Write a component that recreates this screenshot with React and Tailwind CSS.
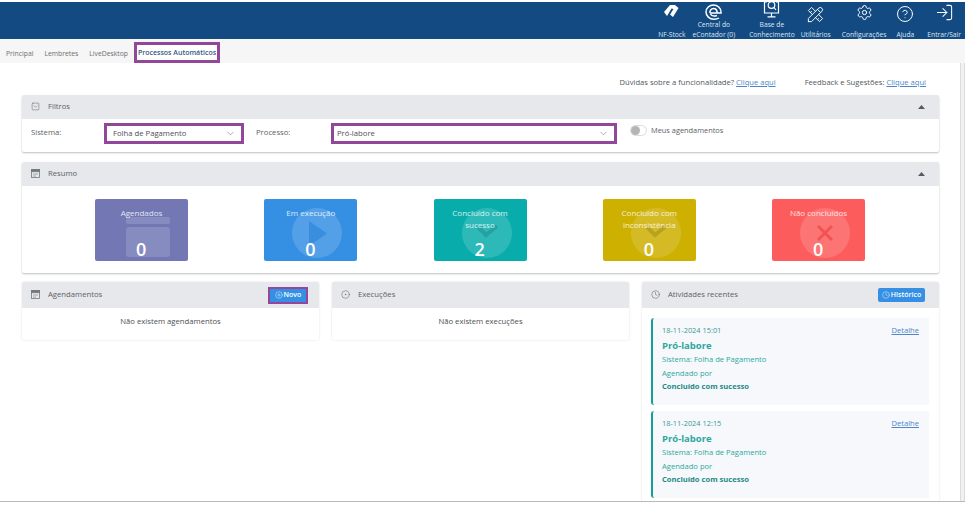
import { Settings, CircleHelp, LogIn, ChevronDown, Clock, CirclePlus, CircleDot, SquareChevronDown } from "lucide-react";
import { TbTools } from "react-icons/tb";

const navItems = [
  { label: ["NF-Stock"], ml: "ml-0", icon: "nf" },
  { label: ["Central do", "eContador (0)"], ml: "ml-[7px]", icon: "e" },
  { label: ["Base de", "Conhecimento"], ml: "ml-[14px]", icon: "base" },
  { label: ["Utilitários"], ml: "ml-[6px]", icon: "tools" },
  { label: ["Configurações"], ml: "ml-[11px]", icon: "gear" },
  { label: ["Ajuda"], ml: "ml-[10px]", icon: "help" },
  { label: ["Entrar/Sair"], ml: "ml-[13px]", icon: "exit" },
];

function NavIcon({ type }) {
  if (type === "nf") {
    return (
      <svg width="16" height="12" viewBox="0 0 16 12" fill="white" className="mt-[3px]">
        <path d="M0 7 L6 0 H11 L14.5 3 L9 12 L6 9.5 L9.5 4 L7.5 3.5 L3 11 Z" />
      </svg>
    );
  }
  if (type === "e") {
    return (
      <svg width="17" height="16" viewBox="0 0 17 16" fill="none" stroke="white" strokeWidth="1.5" className="mt-[2px]">
        <path d="M14 14 C12.5 15 11 15.2 9 15.2 C4.5 15.2 1 12 1 8 C1 4 4.5 1 8.5 1 C12.5 1 16 4 16 8 V9 H5" />
        <path d="M5 9 C4.5 6.5 6.5 4.5 8.5 4.5 C10.5 4.5 12.5 6 12 9 M5.5 10 C6.5 12 9 12.5 12 11.5" />
      </svg>
    );
  }
  if (type === "base") {
    return (
      <svg width="17" height="16" viewBox="0 0 17 16" fill="none" stroke="white" strokeWidth="1.2">
        <path d="M4 0 H1.5 V11 H15.5 V0 H13" />
        <circle cx="8.5" cy="3" r="3.3" />
        <path d="M11 5.5 L13 8 M8.5 11 V14.5 M4.5 14.8 H12.5" />
      </svg>
    );
  }
  if (type === "tools") return <TbTools size={19} color="white" strokeWidth={1.2} className="mt-[3px]" />;
  if (type === "gear") return <Settings size={17} color="white" strokeWidth={1.4} className="mt-[2px]" />;
  if (type === "help") return <CircleHelp size={18} color="white" strokeWidth={1.3} className="mt-[3px]" />;
  return <LogIn size={19} color="white" strokeWidth={1.3} className="mt-[1px]" />;
}

function Header() {
  return (
    <div className="h-[37px] mt-[2px] bg-[#134a82] flex justify-end items-start text-white pr-[4px]">
      {navItems.map((item) => (
        <div key={item.label[0]} className={`${item.ml} h-[37px] flex flex-col items-center justify-between`}>
          <div className="h-[18px] flex items-start">
            <NavIcon type={item.icon} />
          </div>
          <div className="text-[6.7px] leading-[9.5px] text-center whitespace-nowrap text-[#dbe6f2]">
            {item.label.map((l) => (
              <div key={l}>{l}</div>
            ))}
          </div>
        </div>
      ))}
    </div>
  );
}

function Tabs() {
  return (
    <div className="h-[24px] bg-[#f6f6f6] flex items-start text-[6.8px] leading-[10px] text-[#6b6f73]">
      <div className="pl-[6px] pt-[10px]">Principal</div>
      <div className="pl-[11px] pt-[10px]">Lembretes</div>
      <div className="pl-[11px] pt-[10px]">LiveDesktop</div>
      <div className="ml-[6px] mt-[3px] h-[21px] w-[86px] border-[3px] border-[#93479b] bg-white text-[#34597f] font-semibold text-[7px] flex items-center justify-center whitespace-nowrap">
        Processos Automáticos
      </div>
    </div>
  );
}

function CalendarIcon() {
  return (
    <svg width="9" height="9" viewBox="0 0 9 9" fill="none" stroke="#73787c" strokeWidth="0.8">
      <rect x="0.5" y="0.5" width="8" height="8" />
      <rect x="0.5" y="0.5" width="8" height="2.2" fill="#73787c" />
      <path d="M2 5 H7 M2 7 H5" strokeWidth="0.6" />
    </svg>
  );
}

function Triangle() {
  return (
    <svg width="7" height="4" viewBox="0 0 7 4" fill="#555a5e">
      <path d="M3.5 0 L7 4 H0 Z" />
    </svg>
  );
}

function Panel({ title, icon, right, children, className = "" }) {
  return (
    <div className={`bg-white rounded-[2px] ${className}`}>
      <div className="h-[24px] bg-[#e6e8eb] rounded-t-[2px] flex items-center pb-[1px] pl-[9px] pr-[14px] text-[#5d6266] text-[7.7px]">
        <span className="w-[17px] text-[#5d6266]">{icon}</span>
        <span>{title}</span>
        <span className="ml-auto">{right}</span>
      </div>
      {children}
    </div>
  );
}

function Select({ value, className }) {
  return (
    <div className={`${className} h-[21px] border-[3px] border-[#93479b] bg-white flex items-center justify-between pr-[5px] text-[7.7px] text-[#4c5054] font-medium`}>
      <span>{value}</span>
      <ChevronDown size={11} color="#777" strokeWidth={1.3} />
    </div>
  );
}

function StatusIcon({ type }) {
  if (type === "calendar") {
    return (
      <div className="absolute left-[31px] top-[18px] w-[44px] flex flex-col gap-[3px]">
        <div className="h-[7px] bg-white/15 rounded-[2px]" />
        <div className="h-[30px] bg-white/15 rounded-[3px]" />
      </div>
    );
  }
  return (
    <div className="absolute left-[28px] top-[9px] w-[50px] h-[50px] rounded-full bg-white/15 flex items-center justify-center">
      {type === "play" && (
        <svg width="18" height="25" viewBox="0 0 18 25" fill="#3a8ee0" className="ml-[1px]">
          <path d="M0 0 L18 12.5 L0 25 Z" />
        </svg>
      )}
      {type === "check" && (
        <svg width="22" height="15" viewBox="0 0 22 15" fill="none" stroke="rgba(0,0,0,0.13)" strokeWidth="4" className="mt-[-4px]">
          <path d="M2 3 L10 11 L21 2" />
        </svg>
      )}
      {type === "x" && (
        <svg width="16" height="16" viewBox="0 0 16 16" fill="none" stroke="rgba(240,80,80,0.9)" strokeWidth="3" className="mt-[-1px]">
          <path d="M1 1 L15 15 M15 1 L1 15" />
        </svg>
      )}
    </div>
  );
}

const resumo = [
  { title: "Agendados", value: 0, bg: "bg-[#7378b5]", icon: "calendar" },
  { title: "Em execução", value: 0, bg: "bg-[#3590e4]", icon: "play" },
  { title: "Concluído com sucesso", value: 2, bg: "bg-[#08adab]", icon: "check" },
  { title: "Concluído com inconsistência", value: 0, bg: "bg-[#cdb000]", icon: "check" },
  { title: "Não concluídos", value: 0, bg: "bg-[#fd5c5c]", icon: "x" },
];

function StatusCard({ item }) {
  return (
    <div className={`relative w-[93px] h-[62px] rounded-[2px] overflow-hidden ${item.bg} text-white`}>
      <StatusIcon type={item.icon} />
      <div className="relative px-[14px] pt-[8px] text-[8px] leading-[11.5px] text-center text-white/80">{item.title}</div>
      <div className="absolute left-0 right-0 bottom-[1px] text-center text-[18px] leading-[22px] font-semibold pr-[0.5px]">{item.value}</div>
    </div>
  );
}

function Activity({ date }) {
  return (
    <div className="h-[87px] bg-[#f6f8fb] border-l-[2px] border-[#12a19a] rounded-l-[3px] pl-[9px] pr-[10px] pt-[7px] text-[#2da79f] text-[7.6px]">
      <div className="flex justify-between leading-[11px]">
        <span className="text-[7.4px] text-[#3a9a96]">{date}</span>
        <span className="text-[#4d87c7] underline">Detalhe</span>
      </div>
      <div className="text-[9.5px] font-bold leading-[14px] mt-[3px]">Pró-labore</div>
      <div className="leading-[13px]">Sistema: Folha de Pagamento</div>
      <div className="leading-[13px] mt-[1px]">Agendado por</div>
      <div className="leading-[13px] font-bold text-[#1e8a85]">Concluído com sucesso</div>
    </div>
  );
}

export default function App() {
  return (
    <div className="w-[968px] h-[505px] overflow-hidden bg-white" style={{ fontFamily: '"Open Sans", sans-serif' }}>
      <div className="w-[965px] h-[502px] border-b border-[#b9b9b9] overflow-hidden flex flex-col">
        <Header />
        <Tabs />

        <div className="flex flex-1 min-h-0">
          <div className="w-[960px] pl-[22px] pr-[21px]">
            <div className="h-[32px] flex justify-end items-start pt-[14px] text-[7.6px] leading-[11px] text-[#53575b] pr-[13px]">
              <span>
                Dúvidas sobre a funcionalidade? <span className="text-[#4d87c7] underline">Clique aqui</span>
              </span>
              <span className="ml-[29px]">
                Feedback e Sugestões: <span className="text-[#4d87c7] underline">Clique aqui</span>
              </span>
            </div>

            <Panel
              title="Filtros"
              icon={<SquareChevronDown size={9} strokeWidth={1.3} />}
              right={<Triangle />}
              className="h-[57px] shadow-[0_1px_2px_rgba(0,0,0,0.25)]"
            >
              <div className="flex items-start h-[33px] pl-[9px] pt-[4px] text-[7.7px] leading-[19px] text-[#5d6266]">
                <span className="w-[73px]">Sistema:</span>
                <Select value="Folha de Pagamento" className="w-[140px] pl-[6px]" />
                <span className="ml-[12px] w-[75px]">Processo:</span>
                <Select value="Pró-labore" className="w-[286px] pl-[3px]" />
                <span className="ml-[13px] mt-[2px] w-[17px] h-[11px] rounded-full border border-[#dcdcdc] flex items-center">
                  <span className="w-[9px] h-[9px] rounded-full bg-[#b5b5b5]" />
                </span>
                <span className="ml-[4px] mt-[-2px] text-[7.4px]">Meus agendamentos</span>
              </div>
            </Panel>

            <Panel
              title="Resumo"
              icon={<CalendarIcon />}
              right={<Triangle />}
              className="h-[111px] mt-[10px] shadow-[0_1px_2px_rgba(0,0,0,0.25)]"
            >
              <div className="flex justify-between pl-[73px] pr-[74px] pt-[13px]">
                {resumo.map((item) => (
                  <StatusCard key={item.title} item={item} />
                ))}
              </div>
            </Panel>

            <div className="flex gap-[13px] mt-[9px] items-start">
              <Panel
                title="Agendamentos"
                icon={<CalendarIcon />}
                className="w-[297px] h-[58px] shadow-[0_0_2px_rgba(0,0,0,0.15)] [&>div:first-child]:h-[26px]"
                right={
                  <span className="mr-[-3px] mt-[1px] flex items-center justify-center gap-[1px] w-[40px] h-[17px] border-[2px] border-[#93479b] bg-[#3590e4] text-white text-[7px] font-semibold">
                    <CirclePlus size={8} strokeWidth={1.3} />
                    Novo
                  </span>
                }
              >
                <div className="text-center text-[7.7px] text-[#4c5054] pt-[8px] leading-[11px]">Não existem agendamentos</div>
              </Panel>

              <Panel
                title="Execuções"
                icon={<CircleDot size={9} strokeWidth={1.4} />}
                className="w-[297px] h-[58px] shadow-[0_0_2px_rgba(0,0,0,0.15)] [&>div:first-child]:h-[26px]"
              >
                <div className="text-center text-[7.7px] text-[#4c5054] pt-[8px] leading-[11px]">Não existem execuções</div>
              </Panel>

              <Panel
                title="Atividades recentes"
                icon={<Clock size={9} strokeWidth={1.4} />}
                className="w-[297px] h-[300px] shadow-[0_0_2px_rgba(0,0,0,0.15)] [&>div:first-child]:h-[26px]"
                right={
                  <span className="mt-[1px] flex items-center justify-center gap-[1px] w-[47px] h-[14px] rounded-[2px] bg-[#3590e4] text-white text-[7px] font-semibold">
                    <Clock size={8} strokeWidth={1.3} />
                    Histórico
                  </span>
                }
              >
                <div className="flex flex-col gap-[6px] pt-[10px] pl-[9px] pr-[10px]">
                  <Activity date="18-11-2024 15:01" />
                  <Activity date="18-11-2024 12:15" />
                </div>
              </Panel>
            </div>
          </div>
          <div className="w-[5px] bg-[#f1f1f1] border-x border-[#dcdcdc]" />
        </div>
      </div>
    </div>
  );
}
